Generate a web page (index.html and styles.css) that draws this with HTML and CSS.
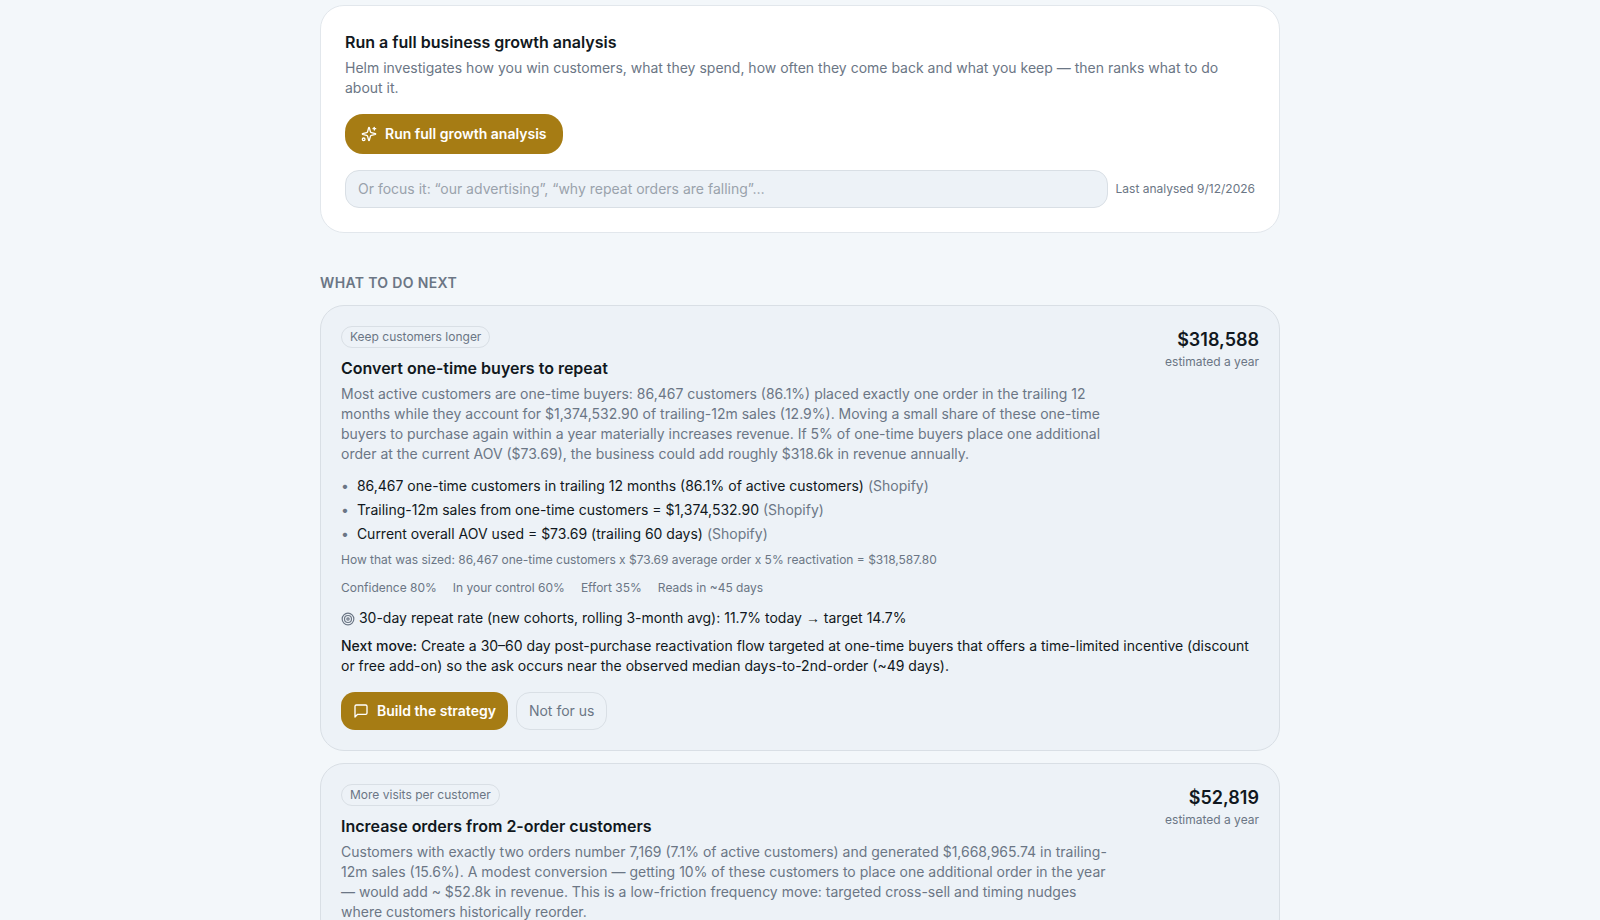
FILE: index.html
```html
<!DOCTYPE html>
<html lang="en">
	<head>
		<meta charset="UTF-8">
		<title>Helm - Growth</title>
		<link rel="stylesheet" href="styles.css">
	</head>
	<body>
		<main class="page">
			<section class="hero">
				<h2 class="card-title">Run a full business growth analysis</h2>
				<p class="desc">Helm investigates how you win customers, what they spend, how often they come back and what you keep — then ranks what to do about it.</p>
				<button class="btn btn-primary btn-run" type="button">
					<svg class="icon" viewBox="0 0 24 24">
						<path d="M9.937 15.5A2 2 0 0 0 8.5 14.063l-6.135-1.582a.5.5 0 0 1 0-.962L8.5 9.936A2 2 0 0 0 9.937 8.5l1.582-6.135a.5.5 0 0 1 .963 0L14.063 8.5A2 2 0 0 0 15.5 9.937l6.135 1.581a.5.5 0 0 1 0 .964L15.5 14.063a2 2 0 0 0-1.437 1.437l-1.582 6.135a.5.5 0 0 1-.963 0z"/>
						<path d="M20 2v4"/>
						<path d="M22 4h-4"/>
						<circle cx="4" cy="20" r="2"/>
					</svg>
					Run full growth analysis
				</button>
				<div class="focus-row">
					<input class="focus-input" type="text" aria-label="Focus the analysis" placeholder="Or focus it: “our advertising”, “why repeat orders are falling”…">
					<span class="small">Last analysed 9/12/2026</span>
				</div>
			</section>

			<h2 class="section-title">What to do next</h2>

			<div class="moves">
				<article class="move">
					<div class="move-top">
						<div class="move-text">
							<span class="pill">Keep customers longer</span>
							<h3 class="card-title">Convert one-time buyers to repeat</h3>
							<p class="desc">Most active customers are one-time buyers: 86,467 customers (86.1%) placed exactly one order in the trailing 12 months while they account for $1,374,532.90 of trailing-12m sales (12.9%). Moving a small share of these one-time buyers to purchase again within a year materially increases revenue. If 5% of one-time buyers place one additional order at the current AOV ($73.69), the business could add roughly $318.6k in revenue annually.</p>
						</div>
						<div class="amount">
							<p class="amount-value">$318,588</p>
							<p class="small">estimated a year</p>
						</div>
					</div>
					<ul class="facts">
						<li><p>86,467 one-time customers in trailing 12 months (86.1% of active customers) <span class="source">(Shopify)</span></p></li>
						<li><p>Trailing-12m sales from one-time customers = $1,374,532.90 <span class="source">(Shopify)</span></p></li>
						<li><p>Current overall AOV used = $73.69 (trailing 60 days) <span class="source">(Shopify)</span></p></li>
					</ul>
					<p class="small sizing">How that was sized: 86,467 one-time customers x $73.69 average order x 5% reactivation = $318,587.80</p>
					<div class="small scores">
						<span>Confidence 80%</span>
						<span>In your control 60%</span>
						<span>Effort 35%</span>
						<span>Reads in ~45 days</span>
					</div>
					<p class="target">
						<svg class="icon icon-target" viewBox="0 0 24 24">
							<circle cx="12" cy="12" r="10"/>
							<circle cx="12" cy="12" r="6"/>
							<circle cx="12" cy="12" r="2"/>
						</svg>
						30-day repeat rate (new cohorts, rolling 3-month avg): 11.7% today <span class="arrow">→</span> target 14.7%
					</p>
					<p class="next"><b>Next move:</b> Create a 30–60 day post-purchase reactivation flow targeted at one-time buyers that offers a time-limited incentive (discount or free add-on) so the ask occurs near the observed median days-to-2nd-order (~49 days).</p>
					<div class="actions">
						<button class="btn btn-primary" type="button">
							<svg class="icon" viewBox="0 0 24 24">
								<path d="M21 15a2 2 0 0 1-2 2H7l-4 4V5a2 2 0 0 1 2-2h14a2 2 0 0 1 2 2z"/>
							</svg>
							Build the strategy
						</button>
						<button class="btn btn-plain" type="button">Not for us</button>
					</div>
				</article>

				<article class="move">
					<div class="move-top">
						<div class="move-text">
							<span class="pill">More visits per customer</span>
							<h3 class="card-title">Increase orders from 2-order customers</h3>
							<p class="desc">Customers with exactly two orders number 7,169 (7.1% of active customers) and generated $1,668,965.74 in trailing-12m sales (15.6%). A modest conversion — getting 10% of these customers to place one additional order in the year — would add ~ $52.8k in revenue. This is a low-friction frequency move: targeted cross-sell and timing nudges where customers historically reorder.</p>
						</div>
						<div class="amount">
							<p class="amount-value">$52,819</p>
							<p class="small">estimated a year</p>
						</div>
					</div>
				</article>
			</div>
		</main>
	</body>
</html>
```
FILE: styles.css
```css
*{
	box-sizing:border-box;
}
h2,h3,ul,p{
	margin:0;
	padding:0;
}
li{
	list-style:none;
}
body{
	margin:0;
	height:100vh;
	overflow:hidden;
	background:#f3f7fa;
	color:#111820;
	font-family:Inter,"Liberation Sans",sans-serif;
	font-size:14px;
	line-height:20px;
}
.page{
	max-width:960px;
	margin:0 auto;
	padding-top:5px;
}

.hero{
	padding:24px;
	background:#fff;
	border:1px solid #e2e7ec;
	border-radius:24px;
}
.card-title{
	font-size:16px;
	line-height:24px;
	font-weight:600;
}
.desc{
	margin-top:4px;
	color:#6b7685;
}
.small{
	font-size:12px;
	line-height:16px;
	color:#6b7685;
}

.btn{
	display:inline-flex;
	align-items:center;
	gap:8px;
	height:38px;
	padding:0 12px;
	border:none;
	border-radius:14px;
	font-family:inherit;
	font-size:14px;
	line-height:20px;
	cursor:pointer;
}
.btn-primary{
	background:#a67c14;
	color:#fff;
	font-weight:600;
}
.btn-run{
	height:40px;
	margin-top:16px;
	padding:0 16px;
	border-radius:18px;
}
.btn-plain{
	background:transparent;
	border:1px solid #d9dfe5;
	color:#6b7685;
}
.icon{
	width:16px;
	height:16px;
	fill:none;
	stroke:currentColor;
	stroke-width:2;
	stroke-linecap:round;
	stroke-linejoin:round;
}

.focus-row{
	display:flex;
	align-items:center;
	gap:8px;
	margin-top:16px;
}
.focus-input{
	flex:1;
	min-width:0;
	padding:8px 12px;
	background:#edf2f7;
	border:1px solid #d9dfe5;
	border-radius:14px;
	color:#111820;
	font-family:inherit;
	font-size:14px;
	line-height:20px;
}
.focus-input::placeholder{
	color:#9aa2ac;
	opacity:1;
}

.section-title{
	margin:40px 0 12px;
	font-size:14px;
	line-height:20px;
	font-weight:600;
	letter-spacing:0.025em;
	text-transform:uppercase;
	color:#6b7685;
}

.moves{
	display:flex;
	flex-direction:column;
	gap:12px;
}
.move{
	padding:20px;
	background:#edf2f7;
	border:1px solid #d9dfe5;
	border-radius:24px;
}
.move-top{
	display:flex;
	justify-content:space-between;
	align-items:flex-start;
	gap:16px;
}
.move-text{
	max-width:768px;
}
.pill{
	display:table;
	margin-bottom:8px;
	padding:2px 8px;
	border:1px solid #d9dfe5;
	border-radius:11px;
	font-size:12px;
	line-height:16px;
	color:#6b7685;
}
.amount{
	flex-shrink:0;
	text-align:right;
}
.amount-value{
	font-size:18px;
	line-height:28px;
	font-weight:600;
}

.facts{
	display:flex;
	flex-direction:column;
	gap:4px;
	margin-top:12px;
}
.facts li{
	display:flex;
	gap:8px;
}
.facts li::before{
	content:"•";
	color:#6b7685;
}
.source{
	color:#6b7685;
}
.sizing{
	margin-top:8px;
}
.scores{
	display:flex;
	flex-wrap:wrap;
	gap:4px 16px;
	margin-top:12px;
}
.target{
	margin-top:12px;
}
.arrow{
	font-family:"Liberation Sans",sans-serif;
}
.icon-target{
	width:14px;
	height:14px;
	vertical-align:middle;
	color:#6b7685;
}
.next{
	margin-top:8px;
}
.next b{
	font-weight:500;
}
.actions{
	display:flex;
	gap:8px;
	margin-top:16px;
}
```
